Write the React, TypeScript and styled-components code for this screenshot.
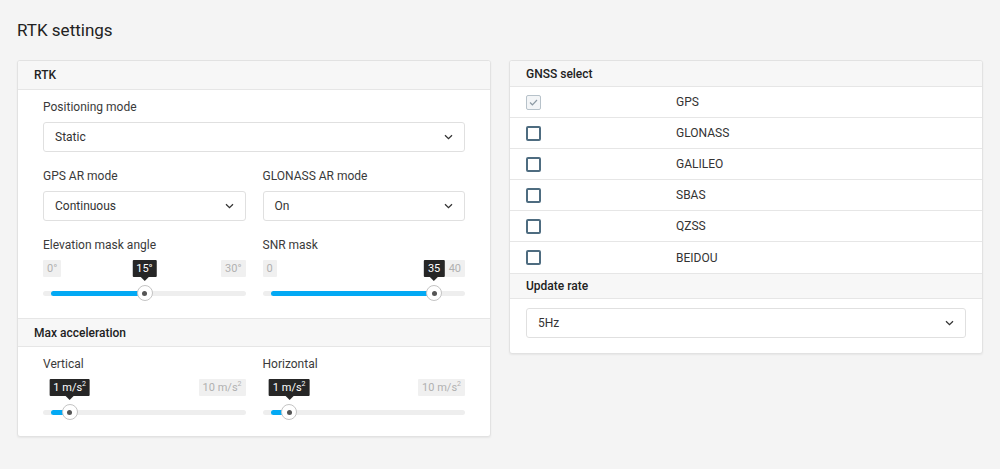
import React from "react";
import styled, { createGlobalStyle } from "styled-components";

const GlobalStyle = createGlobalStyle`
  html, body { margin: 0; padding: 0; background: #f4f4f4; }
  body { font-family: Roboto, "Liberation Sans", Arial, sans-serif; color: #333; }
  * { box-sizing: border-box; }
`;

const Page = styled.div`
  padding: 19px 17px 0 17px;
  width: 1000px;
  height: 469px;
`;

const Title = styled.h1`
  margin: 0 0 19px 0;
  font-size: 17px;
  line-height: 22px;
  font-weight: 400;
  color: #222;
`;

const Columns = styled.div`
  display: grid;
  grid-template-columns: 474px 474px;
  column-gap: 18px;
  align-items: start;
`;

const Card = styled.section`
  background: #fff;
  border: 1px solid #e2e2e2;
  border-radius: 3px;
  box-shadow: 0 1px 2px rgba(0, 0, 0, 0.06);
  overflow: hidden;
`;

const CardHeader = styled.div<{ $h: number; $top?: boolean }>`
  height: ${(p) => p.$h}px;
  display: flex;
  align-items: center;
  padding-left: 16px;
  background: #f7f7f7;
  border-bottom: 1px solid #e6e6e6;
  ${(p) => (p.$top ? "border-top: 1px solid #e6e6e6;" : "")}
  font-size: 12px;
  font-weight: 500;
  color: #222;
`;

const Body = styled.div<{ $pb: number }>`
  padding: 9px 25px ${(p) => p.$pb}px 25px;
  display: flex;
  flex-direction: column;
  gap: 16px;
`;

const Row2 = styled.div`
  display: grid;
  grid-template-columns: 1fr 1fr;
  column-gap: 17px;
`;

const Field = styled.div`
  display: flex;
  flex-direction: column;
`;

const Label = styled.div`
  font-size: 12px;
  line-height: 16px;
  color: #3a3a3a;
  margin-bottom: 7px;
`;

const SelectBox = styled.div`
  height: 30px;
  border: 1px solid #e0e0e0;
  border-radius: 3px;
  background: #fff;
  display: flex;
  align-items: center;
  justify-content: space-between;
  padding: 0 11px 0 11px;
  font-size: 12px;
  color: #333;
`;

const Chevron = () => (
  <svg width="9" height="6" viewBox="0 0 9 6" fill="none">
    <path d="M1 1.2 L4.5 4.6 L8 1.2" stroke="#333" strokeWidth="1.3" />
  </svg>
);

const Select = ({ value }: { value: string }) => (
  <SelectBox>
    <span>{value}</span>
    <Chevron />
  </SelectBox>
);

const SliderWrap = styled.div`
  display: flex;
  flex-direction: column;
`;

const ValueRow = styled.div`
  position: relative;
  height: 17px;
  display: flex;
  justify-content: space-between;
`;

const Bound = styled.span<{ $hidden?: boolean }>`
  height: 17px;
  padding: 0 4px;
  background: #f0f0f0;
  color: #b0b0b0;
  font-size: 11px;
  line-height: 17px;
  border-radius: 1px;
  visibility: ${(p) => (p.$hidden ? "hidden" : "visible")};
`;

const Tip = styled.span`
  position: absolute;
  top: 0;
  transform: translateX(-50%);
  height: 17px;
  padding: 0 4px;
  background: #262626;
  color: #fff;
  font-size: 11px;
  line-height: 17px;
  border-radius: 1px;
  white-space: nowrap;
  &::after {
    content: "";
    position: absolute;
    left: 50%;
    bottom: -4px;
    margin-left: -4px;
    border-left: 4px solid transparent;
    border-right: 4px solid transparent;
    border-top: 4px solid #262626;
  }
`;

const Sup = styled.sup`
  font-size: 7px;
  vertical-align: top;
  position: relative;
  top: -3px;
`;

const TrackArea = styled.div`
  position: relative;
  height: 20px;
  margin-top: 6px;
  display: flex;
  align-items: center;
`;

const Track = styled.div`
  position: relative;
  width: 100%;
  height: 5px;
  border-radius: 3px;
  background: #eeeeee;
`;

const Fill = styled.div`
  position: absolute;
  left: 8px;
  top: 0;
  height: 5px;
  border-radius: 3px;
  background: #03a9f4;
`;

const Thumb = styled.div`
  position: absolute;
  top: 50%;
  width: 16px;
  height: 16px;
  margin: -8px 0 0 -8px;
  border-radius: 50%;
  background: #fff;
  border: 1px solid #c4c4c4;
  display: flex;
  align-items: center;
  justify-content: center;
  &::after {
    content: "";
    width: 5px;
    height: 5px;
    border-radius: 50%;
    background: #555;
  }
`;

const TRACK_W = 203;
const INSET = 8;

const Slider = ({
  min,
  max,
  value,
  fmt,
  hideMin,
}: {
  min: number;
  max: number;
  value: number;
  fmt: (v: number) => React.ReactNode;
  hideMin?: boolean;
}) => {
  const x = INSET + ((value - min) / (max - min)) * (TRACK_W - 2 * INSET);
  return (
    <SliderWrap>
      <ValueRow>
        <Bound $hidden={hideMin}>{hideMin ? "" : fmt(min)}</Bound>
        <Tip style={{ left: x }}>{fmt(value)}</Tip>
        <Bound>{fmt(max)}</Bound>
      </ValueRow>
      <TrackArea>
        <Track>
          <Fill style={{ width: x - INSET }} />
        </Track>
        <Thumb style={{ left: x }} />
      </TrackArea>
    </SliderWrap>
  );
};

const GnssRow = styled.div`
  height: 31px;
  display: grid;
  grid-template-columns: 150px 1fr;
  align-items: center;
  padding-left: 16px;
  border-bottom: 1px solid #e6e6e6;
  font-size: 12px;
  color: #333;
  &:last-child { border-bottom: none; }
`;

const Box = styled.span<{ $disabled?: boolean }>`
  width: 15px;
  height: 15px;
  border-radius: 2px;
  border: ${(p) => (p.$disabled ? "1.5px solid #b7c2ca" : "2px solid #4e6c80")};
  background: ${(p) => (p.$disabled ? "#f3f5f7" : "#fff")};
  display: flex;
  align-items: center;
  justify-content: center;
`;

const Check = ({ checked, disabled }: { checked?: boolean; disabled?: boolean }) => (
  <Box $disabled={disabled}>
    {checked && (
      <svg width="9" height="7" viewBox="0 0 9 7" fill="none">
        <path d="M1 3.5 L3.4 5.8 L8 1" stroke="#8d9aa4" strokeWidth="1.2" />
      </svg>
    )}
  </Box>
);

const RightBody = styled.div`
  padding: 9px 16px 15px 16px;
`;

const deg = (v: number) => `${v}°`;
const num = (v: number) => `${v}`;
const acc = (v: number) => (
  <>
    {v} m/s<Sup>2</Sup>
  </>
);

const gnss = ["GPS", "GLONASS", "GALILEO", "SBAS", "QZSS", "BEIDOU"];

export default function App() {
  return (
    <Page>
      <GlobalStyle />
      <Title>RTK settings</Title>
      <Columns>
        <Card>
          <CardHeader $h={29}>RTK</CardHeader>
          <Body $pb={15}>
            <Field>
              <Label>Positioning mode</Label>
              <Select value="Static" />
            </Field>
            <Row2>
              <Field>
                <Label>GPS AR mode</Label>
                <Select value="Continuous" />
              </Field>
              <Field>
                <Label>GLONASS AR mode</Label>
                <Select value="On" />
              </Field>
            </Row2>
            <Row2>
              <Field>
                <Label>Elevation mask angle</Label>
                <Slider min={0} max={30} value={15} fmt={deg} />
              </Field>
              <Field>
                <Label>SNR mask</Label>
                <Slider min={0} max={40} value={35} fmt={num} />
              </Field>
            </Row2>
          </Body>
          <CardHeader $h={29} $top>
            Max acceleration
          </CardHeader>
          <Body $pb={14}>
            <Row2>
              <Field>
                <Label>Vertical</Label>
                <Slider min={0} max={10} value={1} fmt={acc} hideMin />
              </Field>
              <Field>
                <Label>Horizontal</Label>
                <Slider min={0} max={10} value={1} fmt={acc} hideMin />
              </Field>
            </Row2>
          </Body>
        </Card>
        <Card>
          <CardHeader $h={26}>GNSS select</CardHeader>
          <div>
            {gnss.map((g, i) => (
              <GnssRow key={g}>
                <Check checked={i === 0} disabled={i === 0} />
                <span>{g}</span>
              </GnssRow>
            ))}
          </div>
          <CardHeader $h={26} $top>
            Update rate
          </CardHeader>
          <RightBody>
            <Select value="5Hz" />
          </RightBody>
        </Card>
      </Columns>
    </Page>
  );
}
